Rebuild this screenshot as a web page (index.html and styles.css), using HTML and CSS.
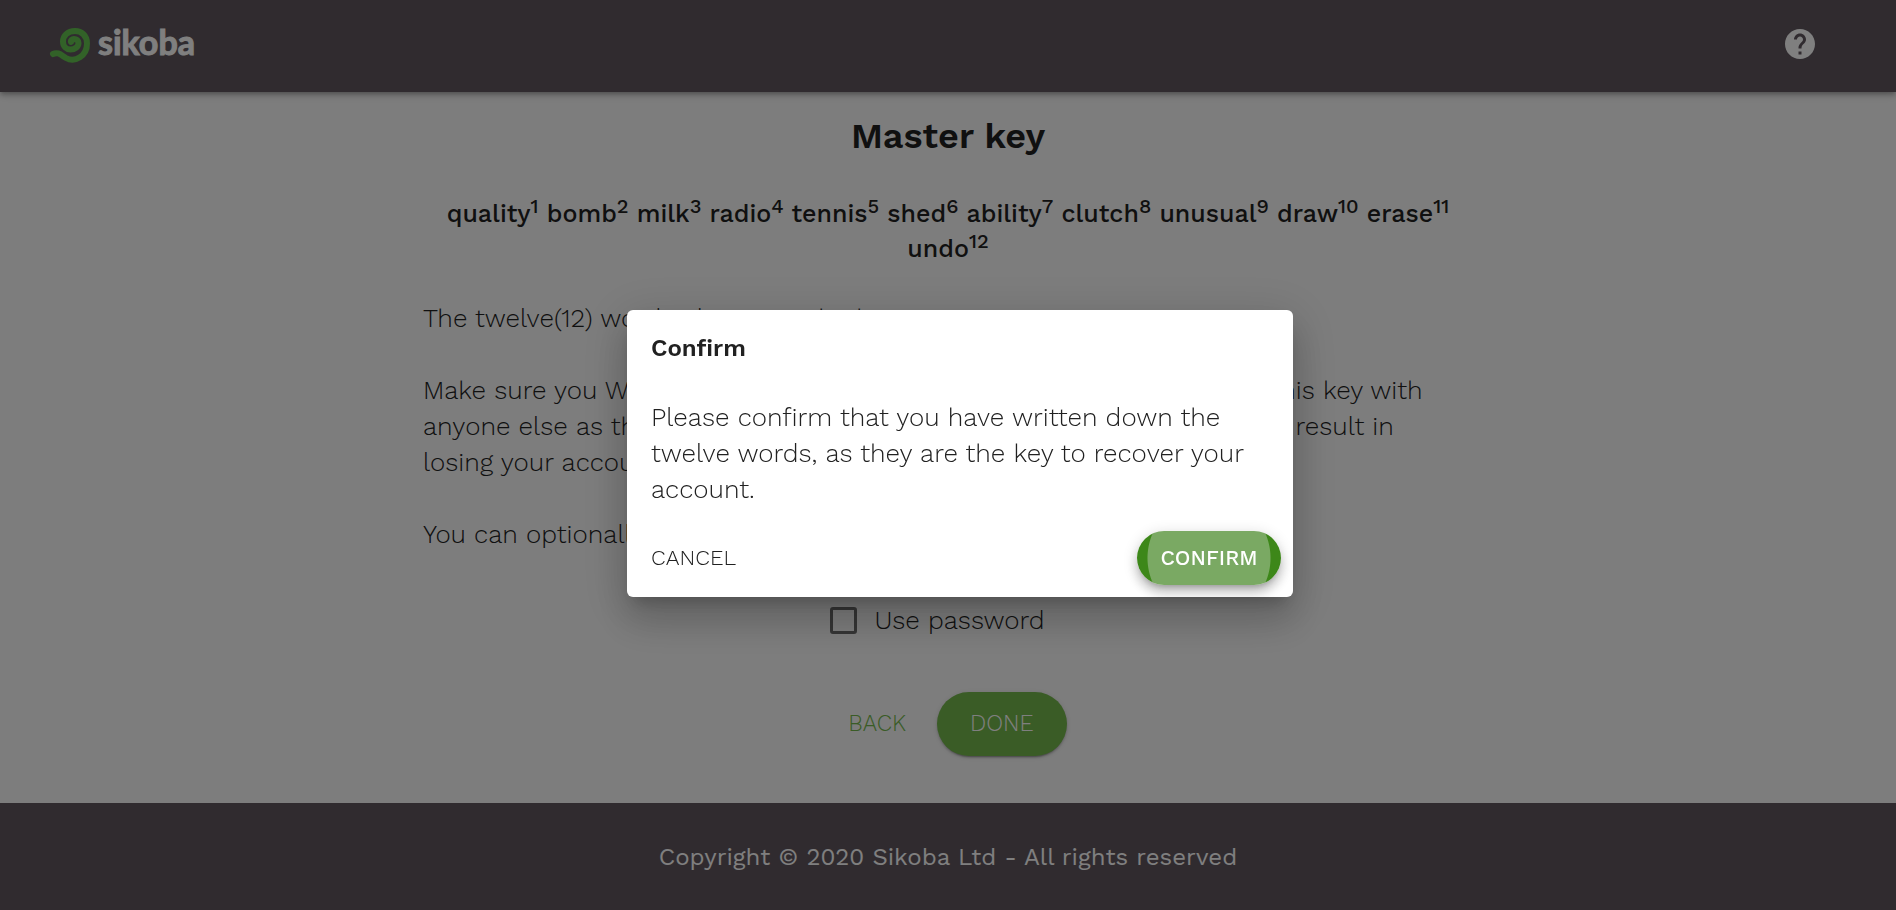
FILE: index.html
```html
<!DOCTYPE html>
<html lang="en">
<head>
<meta charset="utf-8">
<title>Sikoba - Master key</title>
<link rel="stylesheet" href="styles.css">
</head>
<body>
<div class="app">
  <header class="topbar">
    <a class="brand" href="#" aria-label="sikoba">
      <svg class="brand-mark" viewBox="0 0 42 42" aria-hidden="true"><path d="M4 30C9 27.500 12 31 17 34C26 39 38 32 38 19.500C38 11.500 32.500 7 26 7C18.500 7 14 12 14 17.500C14 22.500 17.500 25.500 21.500 25.500C26 25.500 29.500 22.500 29.500 19C29.500 16.500 27.500 15 25 15C23 15 21.500 16.500 22 18" /></svg>
      <span class="brand-name">sikoba</span>
    </a>
    <button class="help" type="button" aria-label="Help">
      <svg viewBox="0 0 24 24" aria-hidden="true"><path d="M12 2C6.480 2 2 6.480 2 12s4.480 10 10 10 10-4.480 10-10S17.520 2 12 2zm1 17h-2v-2h2v2zm2.070-7.750l-.9.920C13.450 12.900 13 13.500 13 15h-2v-.5c0-1.100.45-2.100 1.170-2.830l1.240-1.260c.37-.36.590-.86.590-1.410 0-1.100-.9-2-2-2s-2 .9-2 2H8c0-2.210 1.790-4 4-4s4 1.790 4 4c0 .88-.36 1.680-.93 2.250z"/></svg>
    </button>
  </header>
  <main class="content">
    <h1 class="title">Master key</h1>
    <p class="words">quality<sup>1</sup> bomb<sup>2</sup> milk<sup>3</sup> radio<sup>4</sup> tennis<sup>5</sup> shed<sup>6</sup> ability<sup>7</sup> clutch<sup>8</sup> unusual<sup>9</sup> draw<sup>10</sup> erase<sup>11</sup> undo<sup>12</sup></p>
    <div class="copy">
      <p>The twelve(12) words above are the key.</p>
      <p>Make sure you WRITE DOWN the words and keep them. Do not share this key with anyone else as this would give them access to its funds and that could result in losing your account.</p>
      <p>You can optionally add a password.</p>
    </div>
    <label class="check"><input type="checkbox" class="box"><span>Use password</span></label>
    <div class="actions">
      <button class="btn back" type="button">BACK</button>
      <button class="btn done" type="button">DONE</button>
    </div>
  </main>
  <footer class="footer">Copyright © 2020 Sikoba Ltd - All rights reserved</footer>
</div>
<div class="backdrop">
  <section class="dialog" role="dialog" aria-modal="true" aria-labelledby="dialog-title">
    <h2 class="dialog-title" id="dialog-title">Confirm</h2>
    <p class="dialog-text">Please confirm that you have written down the twelve words, as they are the key to recover your account.</p>
    <div class="dialog-actions">
      <button class="btn cancel" type="button">CANCEL</button>
      <button class="btn confirm" type="button">CONFIRM</button>
    </div>
  </section>
</div>
</body>
</html>
```
FILE: styles.css
```css
* { box-sizing: border-box; }
body {
  margin: 0;
  color: #212121;
  background: #fafafa;
  font-family: "Work Sans", Inter, "Open Sans", sans-serif;
  font-size: 26px;
  font-weight: 300;
  line-height: 36px;
}
h1, h2, p { margin: 0; }
button { border: 0; background: none; font: inherit; cursor: pointer; }

.app { display: flex; flex-direction: column; min-height: 100vh; }
.topbar {
  display: flex;
  justify-content: space-between;
  height: 92px;
  padding: 24px 76px 0 49px;
  background: #60575f;
  box-shadow: 0 2px 4px -1px rgba(0, 0, 0, .2), 0 4px 5px rgba(0, 0, 0, .14), 0 1px 10px rgba(0, 0, 0, .12);
}
.brand { display: flex; align-items: flex-start; gap: 7px; color: #fff; text-decoration: none; }
.brand-mark { width: 42px; height: 42px; fill: none; stroke: #64c450; stroke-width: 6; stroke-linecap: round; }
.brand-name { font-family: Lato, sans-serif; font-size: 34px; font-weight: 700; line-height: 36px; -webkit-text-stroke: 1px #fff; }
.help { width: 40px; height: 40px; padding: 2px; }
.help svg { display: block; width: 36px; height: 36px; fill: #fff; }

.content { flex: 1; width: 100%; max-width: 1050px; margin: 0 auto; }
.title { margin-top: 20px; text-align: center; font-size: 36px; font-weight: 600; line-height: 48px; }
.words { margin-top: 36px; text-align: center; font-size: 25px; font-weight: 500; line-height: 35px; }
.words sup { font-size: 20px; line-height: 0; }
.copy { display: grid; gap: 36px; margin-top: 34px; }
.copy p { padding-right: 16px; }
.check { display: flex; justify-content: center; align-items: center; gap: 18px; margin: 50px 22px 0 0; }
.box { appearance: none; width: 27px; height: 27px; margin: 0; border: 3px solid #6b6b6b; border-radius: 3px; }
.actions { display: flex; justify-content: center; align-items: center; gap: 12px; margin: 54px 0 46px; }
.btn { font-size: 23px; }
.back { padding: 8px 19px; color: #74b84c; }
.done {
  padding: 14px 33px;
  border-radius: 32px;
  color: #fff;
  background: #74b84c;
  box-shadow: 0 3px 1px -2px rgba(0, 0, 0, .2), 0 2px 2px rgba(0, 0, 0, .14), 0 1px 5px rgba(0, 0, 0, .12);
}
.footer { padding: 36px 24px 35px; text-align: center; color: #fff; background: #60575f; font-size: 24px; font-weight: 400; }

.backdrop {
  position: fixed;
  inset: 0;
  display: flex;
  align-items: center;
  justify-content: center;
  padding: 0 0 4px 24px;
  background: rgba(0, 0, 0, .5);
}
.dialog {
  width: 666px;
  border-radius: 6px;
  background: #fff;
  box-shadow: 0 11px 15px -7px rgba(0, 0, 0, .2), 0 24px 38px 3px rgba(0, 0, 0, .14), 0 9px 46px 8px rgba(0, 0, 0, .12);
}
.dialog-title { padding: 20px 24px 0; font-size: 24px; font-weight: 600; }
.dialog-text { padding: 33px 24px 0; }
.dialog-actions { display: flex; align-items: center; justify-content: space-between; padding: 24px 12px 12px; }
.cancel { padding: 8px 12px; color: #212121; font-size: 22px; }
.confirm {
  width: 144px;
  height: 54px;
  padding: 0;
  border-radius: 27px;
  color: #fff;
  background: radial-gradient(circle, #7aa963 61px, #3d8719 62px);
  font-size: 21px;
  font-weight: 500;
  box-shadow: 0 5px 5px -3px rgba(0, 0, 0, .2), 0 8px 10px 1px rgba(0, 0, 0, .14), 0 3px 14px 2px rgba(0, 0, 0, .12);
}
```
